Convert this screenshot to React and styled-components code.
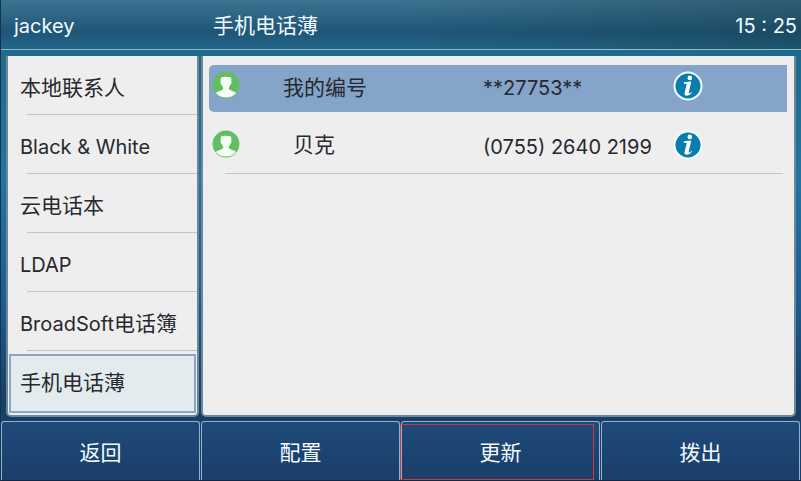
import React from "react";
import styled, { createGlobalStyle } from "styled-components";

const GlobalStyle = createGlobalStyle`
  * {
    box-sizing: border-box;
  }

  body {
    margin: 0;
    font-family: Inter, "Noto Sans CJK SC", sans-serif;
    font-size: 20px;
    line-height: 28px;
    color: #26292d;
  }

  button {
    font: inherit;
    color: inherit;
    background: none;
    border: 0;
    padding: 0;
    cursor: pointer;
  }
`;

const Phone = styled.div`
  display: flex;
  flex-direction: column;
  min-height: 100vh;
  border-left: 1px solid #12344f;
  background: linear-gradient(#1f6a8c 50px, #2274a2 180px, #1e5c90 300px, #173f68 400px);
`;

const Header = styled.header`
  display: grid;
  grid-template-columns: 199px 1fr auto;
  align-items: center;
  height: 50px;
  padding: 2px 4px 0 13px;
  border-bottom: 1px solid #8fbdd0;
  background: linear-gradient(90deg, transparent 50%, rgba(20, 50, 60, 0.35)),
    linear-gradient(#3e7391, #1e5678 65%, #246688);
  color: #f2fbff;
`;

const Title = styled.h1`
  margin: 0;
  font-size: 21px;
  font-weight: 400;
`;

const Main = styled.main`
  display: flex;
  flex: 1;
  gap: 2px;
  padding: 6px 5px 4px;
`;

const Panel = styled.div`
  border: 2px solid #6c8798;
  border-top: 0;
  border-radius: 0 0 5px 5px;
  background: #eeeeee;
`;

const Sidebar = styled(Panel).attrs({ as: "nav" })`
  flex: 0 0 193px;
`;

const Content = styled(Panel)`
  flex: 1;
  padding: 9px 7px 0 6px;
`;

const List = styled.ul`
  margin: 0;
  padding: 0;
  list-style: none;
`;

const GroupItem = styled.li`
  height: 59px;

  &:not(:last-child)::after {
    content: "";
    display: block;
    height: 1px;
    margin-left: 19px;
    background: #c4c4c4;
  }

  &:last-child {
    margin: 3px 1px 0;
  }
`;

const GroupButton = styled.button`
  display: block;
  width: 100%;
  height: ${({ $active }) => ($active ? "59px" : "58px")};
  padding: ${({ $active }) => ($active ? "0 9px 2px" : "6px 12px 0")};
  border: ${({ $active }) => ($active ? "2px solid #8ba3c7" : "0")};
  background: ${({ $active }) => ($active ? "#e3ebee" : "transparent")};
  text-align: left;
  white-space: nowrap;
`;

const Cjk = styled.span`
  font-size: 21px;
`;

const Contact = styled.li`
  display: grid;
  grid-template-columns: 74px 200fr 190fr 114fr;
  align-items: center;
  height: 47px;
  margin-bottom: 12px;
  padding-bottom: 2px;
  border-radius: 5px 0 0 5px;
  background: ${({ $active }) => ($active ? "#85a4c9" : "transparent")};

  &:last-child {
    margin-bottom: 2px;
  }
`;

const Divider = styled.hr`
  height: 1px;
  margin: 0 4px 0 16px;
  border: 0;
  background: #c4c4c4;
`;

const Avatar = styled.svg`
  width: 28px;
  height: 28px;
  margin: 0 0 5px 3px;
`;

const Name = styled.span`
  padding: ${({ $indent }) => ($indent ? "0 0 4px 10px" : "0")};
  font-size: 21px;
`;

const InfoButton = styled.button`
  width: 30px;
  height: 30px;
  margin-bottom: 4px;

  svg {
    display: block;
  }
`;

const SoftKeys = styled.footer`
  display: grid;
  grid-template-columns: repeat(4, 1fr);
  gap: 1px;
  height: 60px;
  padding-right: 1px;
  border-bottom: 1px solid #15283e;
`;

const SoftKey = styled.button`
  position: relative;
  padding: 6px 3px 2px;
  border: 1px solid #8fb2cf;
  border-bottom: 0;
  border-radius: 3px 3px 0 0;
  background: linear-gradient(#1f4a7a, #1a3f69);
  color: #f4fbff;
  font-size: 21px;

  ${({ $marked }) =>
    $marked &&
    `
    &::after {
      content: "";
      position: absolute;
      inset: 2px 5px 0 -2px;
      border: 1px solid #c93a45;
    }
  `}
`;

const groups = ["本地联系人", "Black & White", "云电话本", "LDAP", "BroadSoft电话簿", "手机电话薄"];

const contacts = [
  { name: "我的编号", number: "**27753**", active: true },
  { name: "贝克", number: "(0755) 2640 2199", active: false },
];

const PersonIcon = () => (
  <Avatar viewBox="0 0 28 28" aria-hidden="true">
    <circle cx="14" cy="14" r="13.4" fill="#62bd63" />
    <path
      d="M9 6.500Q10.600 5.700 14 5.700t5 .8q.6 1.500.3 3.900.6.500.1 1.800-.3 1.100-1 1.500-.6 1.800-1.500 2.700v1.500q.4.900 2.200 1.500 3.800 1 5.100 2.600Q20 26.600 14 26.600T3.800 22q1.300-1.600 5.100-2.600 1.900-.6 2.200-1.500v-1.500q-1-.9-1.500-2.700-.7-.4-1-1.500-.5-1.300.1-1.800-.3-2.400.3-3.900Z"
      fill="#f4fff4"
    />
  </Avatar>
);

const InfoIcon = () => (
  <svg width="30" height="30" viewBox="0 0 30 30" aria-hidden="true">
    <circle cx="15" cy="15" r="14.500" fill="#f5fcff" />
    <circle cx="15" cy="15" r="12.500" fill="#087dae" />
    <circle cx="16.800" cy="6.900" r="2.300" fill="#fff" />
    <path
      d="M11 11.300 18.300 10.600 15.800 21.200q-.2 1.300.5 1.300.8 0 2.100-1.600l.7.600Q16.900 24.800 13.900 24.800q-3 0-2.300-3l2-8q.2-1-.8-1h-2.200Z"
      fill="#fff"
    />
  </svg>
);

export default function App() {
  return (
    <>
      <GlobalStyle />
      <Phone>
        <Header>
          <span>jackey</span>
          <Title>手机电话薄</Title>
          <time dateTime="15:25">15 : 25</time>
        </Header>
        <Main>
          <Sidebar>
            <List>
              {groups.map((group) => (
                <GroupItem key={group}>
                  <GroupButton $active={group === "手机电话薄"}>
                    {group.split(/([\u4e00-\u9fff]+)/).map((part, i) => (i % 2 ? <Cjk key={i}>{part}</Cjk> : part))}
                  </GroupButton>
                </GroupItem>
              ))}
            </List>
          </Sidebar>
          <Content>
            <List>
              {contacts.map(({ name, number, active }) => (
                <Contact key={name} $active={active}>
                  <PersonIcon />
                  <Name $indent={!active}>{name}</Name>
                  <span>{number}</span>
                  <InfoButton aria-label={`${name} info`}>
                    <InfoIcon />
                  </InfoButton>
                </Contact>
              ))}
            </List>
            <Divider />
          </Content>
        </Main>
        <SoftKeys>
          <SoftKey>返回</SoftKey>
          <SoftKey>配置</SoftKey>
          <SoftKey $marked>更新</SoftKey>
          <SoftKey>拨出</SoftKey>
        </SoftKeys>
      </Phone>
    </>
  );
}
